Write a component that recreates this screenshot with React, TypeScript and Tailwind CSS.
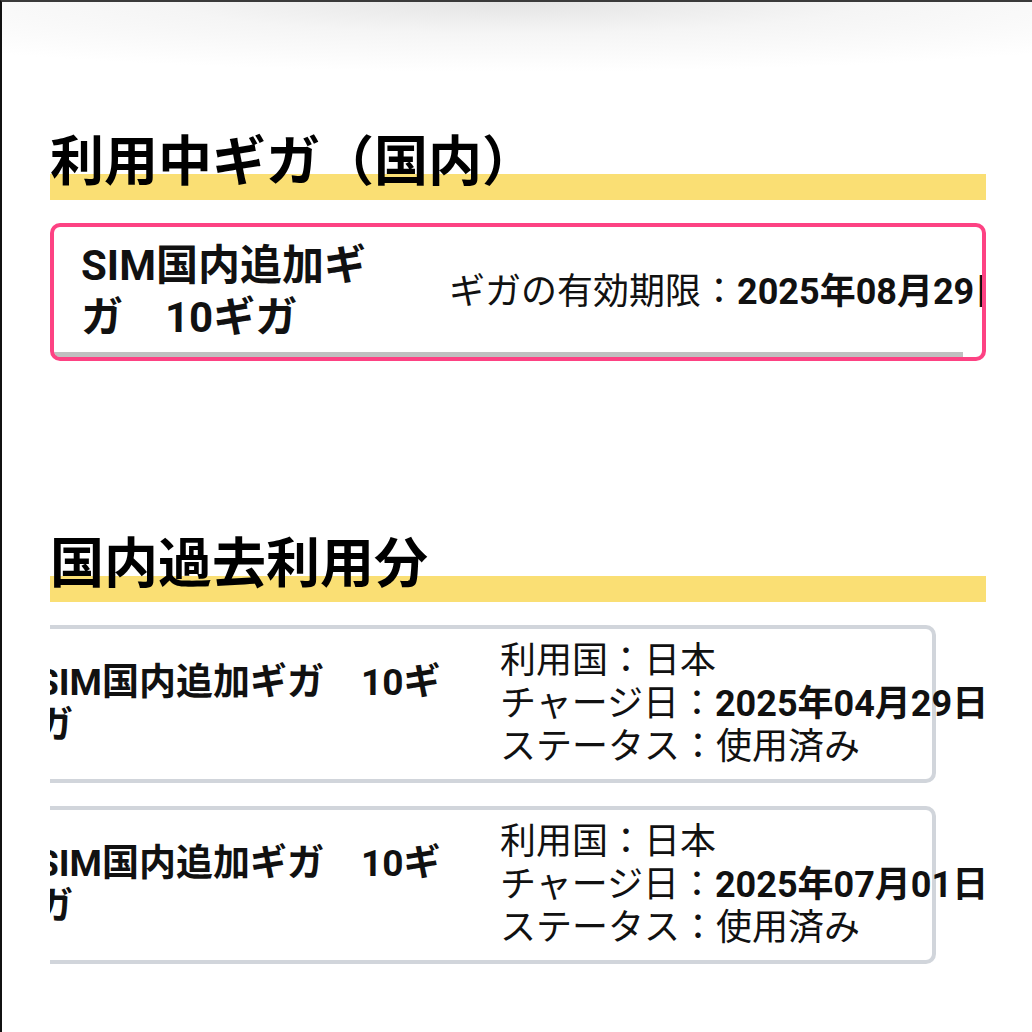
import React from 'react'

interface HistoryItem {
    country: string
    date: string
}

const history: HistoryItem[] = [
    { country: '日本', date: '2025年04月29日' },
    { country: '日本', date: '2025年07月01日' },
]

function SectionTitle({ children }: { children: React.ReactNode }) {
    return (
        <h2 className="h-[66px] pb-[8px] text-[54px] leading-[58px] font-bold text-black bg-[linear-gradient(transparent_calc(100%_-_26px),#fadf74_calc(100%_-_26px))]">
            {children}
        </h2>
    )
}

function HistoryCard({ item }: { item: HistoryItem }) {
    return (
        <div className="flex items-center h-[158px] w-[936px] border-4 border-[#d1d5db] rounded-[10px] pl-[32px]">
            <div className="w-[416px] shrink-0 text-[37px] leading-[43px] font-bold">
                SIM国内追加ギガ　10ギガ
            </div>
            <div className="ml-[48px] text-[36px] leading-[43px] whitespace-nowrap">
                <p>利用国：{item.country}</p>
                <p>チャージ日：<span className="font-bold">{item.date}</span></p>
                <p>ステータス：使用済み</p>
            </div>
        </div>
    )
}

export default function App() {
    return (
        <div className="min-h-[1032px] bg-white border-l-2 border-t-2 border-l-[#111] border-t-[#3a3a3a] text-[#111] font-['Roboto','Noto_Sans_CJK_JP',sans-serif]">
            {/* top shadow */}
            <div className="h-[70px] bg-[radial-gradient(ellipse_75%_100%_at_50%_0%,#e4e4e4,#f5f5f5_45%,#ffffff)]" />

            <div className="ml-[48px] w-[936px] overflow-hidden">
                {/* current */}
                <div className="mt-[62px]">
                    <SectionTitle>利用中ギガ（国内）</SectionTitle>
                </div>

                <div className="relative mt-[23px] h-[138px] flex items-center border-4 border-[#fd4283] rounded-[10px] overflow-hidden pl-[27px]">
                    <div className="w-[300px] shrink-0 text-[42px] leading-[52px] font-bold">
                        SIM国内追加ギガ　10ギガ
                    </div>
                    <div className="ml-[68px] text-[36px] whitespace-nowrap">
                        ギガの有効期限：<span className="font-bold">2025年08月29日</span>
                    </div>
                    {/* scrollbar */}
                    <div className="absolute left-[-4px] bottom-[-4px] h-[9px] w-[913px] bg-[rgba(138,138,138,0.54)]" />
                </div>

                {/* history */}
                <div className="mt-[175px]">
                    <SectionTitle>国内過去利用分</SectionTitle>
                </div>

                <div className="-ml-[50px] mt-[23px] flex flex-col gap-[23px] pb-[60px]">
                    {history.map((item, i) => (
                        <HistoryCard key={i} item={item} />
                    ))}
                </div>
            </div>
        </div>
    )
}
